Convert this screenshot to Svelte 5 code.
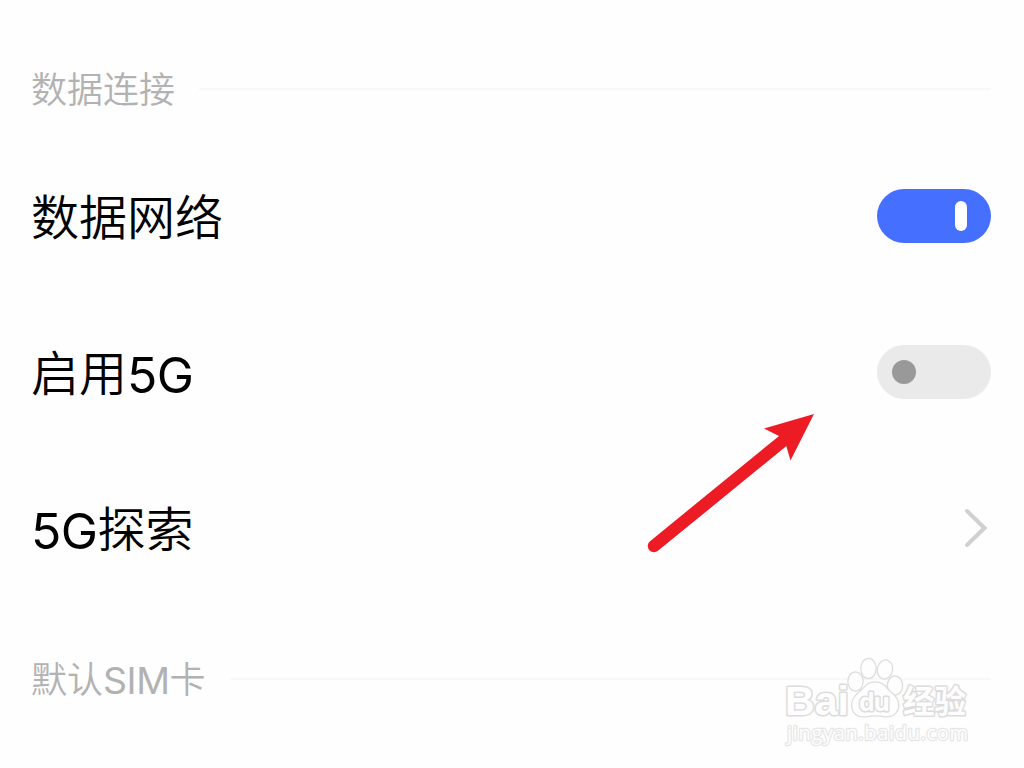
<script lang="ts">
  type Row = {
    label: string;
    kind: 'switch' | 'link';
    on?: boolean;
  };

  let rows = $state<Row[]>([
    { label: '数据网络', kind: 'switch', on: true },
    { label: '启用5G', kind: 'switch', on: false },
    { label: '5G探索', kind: 'link' }
  ]);

  // split mixed labels so latin runs can be sized on their own
  const runs = (text: string) => text.match(/[A-Za-z0-9]+|[^A-Za-z0-9]+/g) ?? [];
  const isLatin = (text: string) => /^[A-Za-z0-9]/.test(text);
</script>

{#snippet mixed(text: string)}
  <span class="label">{#each runs(text) as run}<span class:latin={isLatin(run)}>{run}</span>{/each}</span>
{/snippet}

<main class="settings">
  <h2 class="section-title">{@render mixed('数据连接')}</h2>

  <div class="rows">
    {#each rows as row}
      <div class="row">
        {@render mixed(row.label)}
        {#if row.kind === 'switch'}
          <button
            class="switch"
            class:on={row.on}
            role="switch"
            aria-checked={row.on}
            aria-label={row.label}
            onclick={() => (row.on = !row.on)}
          >
            <span class="thumb"></span>
          </button>
        {:else}
          <svg class="chevron" width="30" height="42" viewBox="0 0 30 42">
            <path d="M6 4 L23.500 21 L6 38" />
          </svg>
        {/if}
      </div>
    {/each}
  </div>

  <h2 class="section-title">{@render mixed('默认SIM卡')}</h2>

  <svg class="arrow" width="180" height="150" viewBox="640 408 180 150">
    <path d="M654 546 L784 440" stroke="#ed1c24" stroke-width="12.5" stroke-linecap="round" />
    <path d="M814 414 L764 428.500 L779 436 L786 445 L790.500 460.500 Z" fill="#ed1c24" />
  </svg>

  <svg class="watermark" width="200" height="100" viewBox="780 652 200 100">
    <g class="outline">
      <text class="brand" x="785" y="715" textLength="64" lengthAdjust="spacingAndGlyphs">Bai</text>
      <ellipse cx="855.500" cy="681.500" rx="7" ry="9" />
      <ellipse cx="868.500" cy="668.500" rx="7" ry="9.500" />
      <ellipse cx="885" cy="669.500" rx="7" ry="9" transform="rotate(12 885 669.500)" />
      <ellipse cx="895" cy="685.500" rx="7" ry="9" />
      <path d="M875 682.500 C867 682.500 865 688 860 692 C855 696 851 701 852.500 708 C854 715 860 717 867 716 C873 715 878 715 884 716 C891 717 897 714 898 707 C899 700 895 696 890 692 C885 687 883 682.500 875 682.500 Z" />
      <text class="du" x="859" y="711" textLength="31">du</text>
      <text class="cjk" x="903" y="712.500" textLength="63" lengthAdjust="spacingAndGlyphs">经验</text>
      <text class="site" x="787" y="740" textLength="181">jingyan.baidu.com</text>
    </g>
  </svg>
</main>

<style>
  :global(body) {
    background: #fefefe;
  }

  .settings {
    position: relative;
    box-sizing: border-box;
    width: 1024px;
    height: 768px;
    padding: 64px 33px 0 31px;
    overflow: hidden;
    font-family: Inter, "Noto Sans CJK SC", sans-serif;
    font-weight: 350;
    color: #000;
  }

  .section-title {
    display: flex;
    align-items: center;
    gap: 24px;
    height: 50px;
    margin: 0;
    font-size: 36px;
    font-weight: 350;
    color: #b2b2b2;
  }

  .section-title::after {
    content: "";
    flex: 1;
    height: 2px;
    background: #f8f8f8;
  }

  .label {
    padding-top: 1px;
    line-height: 50px;
    white-space: nowrap;
  }

  .latin {
    position: relative;
    top: 1px;
    font-size: 1.04em;
    font-weight: 400;
    line-height: 1;
    letter-spacing: -0.012em;
  }

  .rows {
    padding: 24px 0 48px;
  }

  .row {
    display: flex;
    align-items: center;
    justify-content: space-between;
    height: 156px;
    font-size: 48px;
  }

  .row .label {
    padding-top: 3px;
    line-height: 64px;
  }

  .row .latin {
    top: 2px;
    line-height: 1;
  }

  .switch {
    display: flex;
    align-items: center;
    width: 114px;
    height: 54px;
    padding: 0 15px;
    border: 0;
    border-radius: 27px;
    background: #eaeaea;
  }

  .thumb {
    width: 24px;
    height: 24px;
    border-radius: 12px;
    background: #999;
  }

  .switch.on {
    justify-content: flex-end;
    padding: 0 24px;
    background: #456fff;
  }

  .on .thumb {
    width: 12px;
    height: 30px;
    border-radius: 6px;
    background: #fff;
  }

  .chevron {
    fill: none;
    stroke: #d0d0d0;
    stroke-width: 4;
    stroke-linecap: round;
  }

  .arrow {
    position: absolute;
    left: 640px;
    top: 408px;
  }

  .watermark {
    position: absolute;
    left: 780px;
    top: 652px;
  }

  .outline {
    fill: #fefefe;
    stroke: #dcdcdc;
    stroke-width: 3;
    stroke-linejoin: round;
    paint-order: stroke;
  }

  .outline ellipse,
  .outline path {
    stroke-width: 2.5;
  }

  .brand {
    font: 700 40px "Liberation Sans", sans-serif;
  }

  .du {
    font: 700 25px "Open Sans", sans-serif;
  }

  .cjk {
    font: 700 32px "Noto Sans CJK SC", sans-serif;
  }

  .outline .site {
    font: 400 20px "Open Sans", sans-serif;
    stroke: #e6e6e6;
    stroke-width: 2.5;
  }
</style>
